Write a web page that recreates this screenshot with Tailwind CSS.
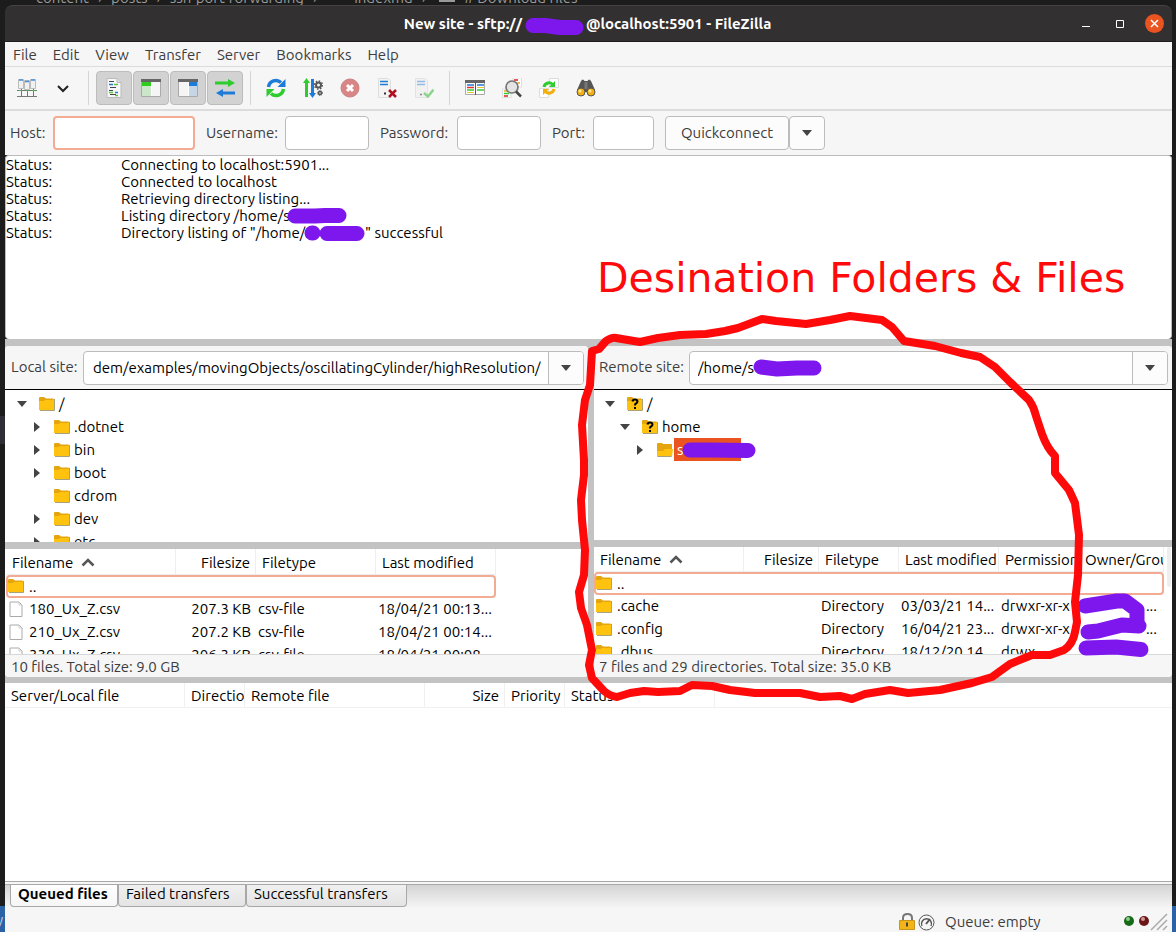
<!DOCTYPE html>
<html lang="en">
<head>
<meta charset="utf-8">
<title>FileZilla</title>
<script src="https://cdn.jsdelivr.net/npm/@tailwindcss/browser@4"></script>
</head>
<body class="relative h-screen overflow-hidden bg-[#1c1c1c] font-['Ubuntu','Noto_Sans',sans-serif] text-[15px] leading-[17px] text-black">

<svg class="hidden" aria-hidden="true">
  <symbol id="folder" viewBox="0 0 16 14"><path d="M0 1h5l1 1h9v11H0z" fill="#ffc20e"/><path d="M0 1q0-1 1-1h4l2 1.500h7.500V3H6L5 4H0z" fill="#e5a50f"/><path d="M1 13.500h14.500V2" fill="none" stroke="#a8a17c"/></symbol>
  <symbol id="unknown" viewBox="0 0 16 14"><use href="#folder"/><path d="M5.500 4.500q.3-2 2.500-2t2.500 2q0 1.200-1.500 2-1 .5-1 2" fill="none" stroke="#000" stroke-width="2"/><path d="M7 10h2v2H7z"/></symbol>
  <symbol id="open" viewBox="0 0 16 14"><path d="M0 1q0-1 1-1h4l1 1h9v12H0z" fill="#e5a50f"/><path d="M0 13V8h6l2-2h8l-1 7.500H0z" fill="#ffc20e"/><path d="M.5 13.500h14" stroke="#a8a17c"/></symbol>
  <symbol id="file" viewBox="0 0 14 16"><path d="M1 1h9l3 3v11.500H1z" fill="#fff" stroke="#aaa"/><path d="M10 1v3h3" fill="none" stroke="#ccc"/></symbol>
  <symbol id="down" viewBox="0 0 10 6"><path d="M0 0h10L5 6z" fill="#444"/></symbol>
  <symbol id="right" viewBox="0 0 6 10"><path d="M0 0v10l6-5z" fill="#444"/></symbol>
  <symbol id="sort" viewBox="0 0 14 9"><path d="M1.500 7.500L7 2l5.500 5.500" fill="none" stroke="#555" stroke-width="2.500"/></symbol>
</svg>

<div class="absolute inset-x-0 top-0 flex h-[5px] items-end gap-[9px] overflow-hidden pl-9 leading-[15px] whitespace-nowrap text-[#999]" aria-hidden="true"><span>content</span><span>›</span><span>posts</span><span>›</span><span>ssh-port-forwarding</span><span>›</span><span class="ml-7">indexmd</span><span>›</span><span class="mb-[3px] ml-1 h-1 w-4 bg-[#999]"></span><span># Download files</span></div>
<div class="absolute top-[416px] left-0 h-7 w-[5px] bg-[#2f2d35]" aria-hidden="true"></div>
<div class="absolute inset-x-0 bottom-0 flex h-[26px] items-center overflow-hidden bg-[#2b61a5] text-white/70" aria-hidden="true"><span class="-ml-1">y</span></div>

<main class="relative flex h-full flex-col pt-[5px] pr-1 pl-[5px]">
  <header class="flex h-[37px] shrink-0 items-center rounded-t-lg border-t border-b border-t-[#454343] border-b-[#1f1d1e] bg-[#333031] pr-2 pl-[101px] text-white">
    <h1 class="flex flex-1 justify-center font-bold"><span>New site - sftp://</span><span class="w-16"></span><span>@localhost:5901 - FileZilla</span></h1>
    <button aria-label="Minimize" class="grid h-5 w-[34px] place-items-center"><svg width="12" height="12"><path d="M2 8.500h8" stroke="#fff"/></svg></button>
    <button aria-label="Maximize" class="grid h-5 w-[34px] place-items-center"><svg width="10" height="10"><path d="M1.500 1.500h7v7h-7z" fill="none" stroke="#fff"/></svg></button>
    <button aria-label="Close" class="ml-2 grid size-[19px] place-items-center rounded-full bg-[#e95420]"><svg width="9" height="9"><path d="M1 1l7 7M8 1l-7 7" stroke="#fff" stroke-width="1.500"/></svg></button>
  </header>

  <nav class="flex h-[25px] shrink-0 items-center gap-4 border-b border-[#dcdcdc] bg-[#f6f6f6] px-2 text-[#3d3d3d]">
    <button>File</button><button>Edit</button><button>View</button><button>Transfer</button><button>Server</button><button>Bookmarks</button><button>Help</button>
  </nav>

  <div class="flex h-11 shrink-0 items-center border-b-2 border-[#dcdcdc] bg-[#f6f6f6]">
    <button aria-label="Site Manager" class="ml-[11px] p-px"><svg width="20" height="20"><g fill="#f1f1f1" stroke="#bbb"><path d="M1.500 1.500h5v9h-5zM13.500 1.500h5v9h-5zM7.500 2.500h5v9h-5z"/></g><path d="M2 2h4M14 2h4M8 3.500h4" stroke="#4a90d9" stroke-width="1.500"/><path d="M0 12.500h20M0 18.500h20M4.500 11v7M10.500 12v7M16.500 11v7" stroke="#777" fill="none"/><path d="M2 12.500h3M9 12.500h3M15 12.500h3" stroke="#5a5"/></svg></button>
    <button aria-label="Site list" class="ml-[17px] p-0.5"><svg width="12" height="9"><path d="M1 2l5 5 5-5" fill="none" stroke="#222" stroke-width="2"/></svg></button>
    <div class="ml-[17px] flex h-[34px] items-center gap-px border-l border-[#d5d5d5] pl-[7px]">
      <button aria-label="Message log" class="grid h-[34px] w-9 place-items-center rounded border border-[#bcbcbc] bg-[#d2d2d2]"><svg width="20" height="20"><path d="M3 .5h10l4 4v15H3z" fill="#f7f7f7" stroke="#bbb"/><path d="M13 .5v4h4" fill="#ddd" stroke="#bbb"/><path d="M5 3.500h5M6 9.500h6M5 12.500h4M6 16.500h6" stroke="#445" /><path d="M5 6.500h4M11 14.500h3" stroke="#2a78d0" stroke-width="1.500"/><path d="M10 6.500h4M5 14.500h4M11 17.500h3" stroke="#5c3" stroke-width="1.500"/></svg></button>
      <button aria-label="Local tree" class="grid h-[34px] w-9 place-items-center rounded border border-[#bcbcbc] bg-[#d2d2d2]"><svg width="20" height="20"><path d="M.5 2h19v16.500H.5z" fill="#f5f5f5" stroke="#aaa"/><path d="M0 1h20v3H0z" fill="#666"/><path d="M1 4h9v4H1z" fill="#2ecc1c"/><path d="M1 8h9v10H1z" fill="#cbe6c8"/><path d="M10.500 4v14" stroke="#fff"/></svg></button>
      <button aria-label="Remote tree" class="grid h-[34px] w-9 place-items-center rounded border border-[#bcbcbc] bg-[#d2d2d2]"><svg width="20" height="20"><path d="M.5 2h19v16.500H.5z" fill="#f5f5f5" stroke="#aaa"/><path d="M0 1h20v3H0z" fill="#666"/><path d="M11 4h8v4h-8z" fill="#1f7bd8"/><path d="M11 8h8v10h-8z" fill="#c6d6e6"/><path d="M10.500 4v14" stroke="#fff"/></svg></button>
      <button aria-label="Transfer queue" class="grid h-[34px] w-9 place-items-center rounded border border-[#bcbcbc] bg-[#d2d2d2]"><svg width="20" height="20"><path d="M0 3.500h13V1l7 4-7 4V6.500H0z" fill="#2ecc2e"/><path d="M20 13.500H8V11l-7 4 7 4v-2.500h12z" fill="#1f7bd8"/></svg></button>
    </div>
    <div class="ml-[7px] flex h-[34px] items-center gap-[17px] border-l border-[#d5d5d5] pl-[15px]">
      <button aria-label="Refresh"><svg width="20" height="20"><path d="M2.500 9a7.500 7.500 0 0 1 12.500-4.500" fill="none" stroke="#1f7bd8" stroke-width="3.500"/><path d="M19.500 1v8h-8z" fill="#1f7bd8"/><path d="M17.500 11A7.500 7.500 0 0 1 5 15.500" fill="none" stroke="#2ecc2e" stroke-width="3.500"/><path d="M.5 19v-8h8z" fill="#2ecc2e"/></svg></button>
      <button aria-label="Process queue"><svg width="20" height="20"><path d="M3.500 19V4" stroke="#2ecc2e" stroke-width="3"/><path d="M0 5l3.500-5L7 5z" fill="#2ecc2e"/><path d="M9.500 1v15" stroke="#1f7bd8" stroke-width="3"/><path d="M6 15l3.500 5 3.500-5z" fill="#1f7bd8"/><g fill="none" stroke="#555"><circle cx="15.500" cy="7" r="2.500" stroke-width="2"/><circle cx="15.500" cy="7" r="4" stroke-width="1.500" stroke-dasharray="1.500 1.600"/><circle cx="17" cy="15" r="1.500" stroke-width="1.500"/><circle cx="17" cy="15" r="2.500" stroke-dasharray="1 1"/></g></svg></button>
      <button aria-label="Cancel"><svg width="20" height="20"><circle cx="10" cy="10" r="9" fill="#d98585" stroke="#c98080"/><path d="M7 7l6 6M13 7l-6 6" stroke="#fff" stroke-width="3"/></svg></button>
      <button aria-label="Disconnect"><svg width="20" height="20"><path d="M1.500.5h9l3 2v17h-12z" fill="#f4f4f4" stroke="#ddd"/><path d="M3 3.500h8M3 6.500h8" stroke="#1f7bd8" stroke-width="1.300"/><path d="M7 15.500h2" stroke="#333" stroke-width="2"/><path d="M12 12l7 7M19 12l-7 7" stroke="#b01020" stroke-width="2.500"/></svg></button>
      <button aria-label="Reconnect"><svg width="20" height="20"><path d="M1.500.5h9l3 2v17h-12z" fill="#f1f1f1" stroke="#e2e2e2"/><path d="M3 3.500h8M3 6.500h8" stroke="#90bbe6" stroke-width="1.300"/><path d="M6 16.500h2" stroke="#888" stroke-width="1.500"/><path d="M10 15l4 3.500 5.500-7" fill="none" stroke="#8ed48e" stroke-width="2.500"/></svg></button>
    </div>
    <div class="ml-[15px] flex h-[34px] items-center gap-[17px] border-l border-[#d5d5d5] pl-[15px]">
      <button aria-label="Directory comparison"><svg width="20" height="20"><path d="M.5 3h19v13.500H.5z" fill="#fff" stroke="#aaa"/><path d="M0 2h20v3H0z" fill="#666"/><path d="M10.500 4v13" stroke="#555"/><path d="M2 7h7M12 7h7" stroke="#1f7bd8" stroke-width="1.500"/><path d="M2 9.500h7" stroke="#d33" stroke-width="1.500"/><path d="M2 12h7M12 12h7" stroke="#3c3" stroke-width="1.500"/><path d="M2 14.500h7M12 9.500h7" stroke="#e8c030"/></svg></button>
      <button aria-label="Filter"><svg width="20" height="20"><path d="M11 0h8.500v9H11zM.5 11H9v8.500H.5z" fill="#fff" stroke="#ddd"/><path d="M12 2h4M2 18h4" stroke="#d22" stroke-width="1.500"/><path d="M15 5h3M2 13h3" stroke="#e8b020" stroke-width="1.500"/><path d="M2 15.500h5" stroke="#3c3" stroke-width="1.500"/><circle cx="10" cy="9" r="6" fill="#e4e4e4" stroke="#777" stroke-width="1.700"/><path d="M14 13.500l5 5" stroke="#444" stroke-width="2.500"/></svg></button>
      <button aria-label="Synchronized browsing"><svg width="20" height="20"><path d="M10.500.5h9v9h-9zM.5 10.500h9v9h-9z" fill="#fff" stroke="#ddd"/><path d="M5 9a5 5 0 0 1 9-2" fill="none" stroke="#2ecc2e" stroke-width="3"/><path d="M16 3v6h-6z" fill="#2ecc2e"/><path d="M15 11a5 5 0 0 1-9 2" fill="none" stroke="#f2b010" stroke-width="3"/><path d="M4 17v-6h6z" fill="#f2b010"/></svg></button>
      <button aria-label="Find files"><svg width="20" height="20"><path d="M1 12L5 3q2-3 3.500 0h3q1.500-3 3.500 0l4 9-7 2h-4z" fill="#555"/><path d="M8.500 4v7h3V4" fill="#777"/><circle cx="5" cy="14" r="4" fill="#f2b010" stroke="#555"/><circle cx="15" cy="14" r="4" fill="#f2b010" stroke="#555"/><circle cx="4" cy="13" r="1.500" fill="#ffe9a0"/><circle cx="14" cy="13" r="1.500" fill="#ffe9a0"/></svg></button>
    </div>
  </div>

  <form class="flex h-[44px] shrink-0 items-center bg-[#f6f6f6] pl-[5px] text-[#3d3d3d]">
    <label for="host" class="w-[43px] pb-0.5">Host:</label><input id="host" class="h-[34px] w-[142px] rounded border-2 border-[#f3ab94] bg-white px-2 outline-none">
    <label for="user" class="ml-[11px] w-[79px] pb-0.5 whitespace-nowrap">Username:</label><input id="user" class="h-[34px] w-[84px] rounded border border-[#bcbcbc] bg-white px-2">
    <label for="pass" class="ml-[11px] w-[77px] pb-0.5 whitespace-nowrap">Password:</label><input id="pass" type="password" class="h-[34px] w-[84px] rounded border border-[#bcbcbc] bg-white px-2">
    <label for="port" class="ml-[11px] w-[41px] pb-0.5">Port:</label><input id="port" class="h-[34px] w-[61px] rounded border border-[#bcbcbc] bg-white px-2">
    <button type="button" class="ml-[11px] h-[34px] w-[124px] rounded border border-[#bcbcbc] bg-[#fcfcfc] pb-0.5">Quickconnect</button>
    <button type="button" aria-label="Quickconnect history" class="grid h-[34px] w-9 place-items-center rounded border border-[#bcbcbc] bg-[#fcfcfc]"><svg width="10" height="6"><use href="#down"/></svg></button>
  </form>

  <section aria-label="Message log" class="h-[184px] shrink-0 rounded border border-[#bcbcbc] border-b-0 bg-white">
    <dl class="grid grid-cols-[115px_1fr]">
      <dt>Status:</dt><dd>Connecting to localhost:5901...</dd>
      <dt>Status:</dt><dd>Connected to localhost</dd>
      <dt>Status:</dt><dd>Retrieving directory listing...</dd>
      <dt>Status:</dt><dd>Listing directory /home/s</dd>
      <dt>Status:</dt><dd class="flex"><span class="w-[244px]">Directory listing of "/home/s</span><span>" successful</span></dd>
    </dl>
  </section>

  <div class="grid h-[344px] shrink-0 grid-cols-[583px_1fr] gap-x-1.5 bg-[#c3c3c3] pt-[7px] pb-1.5">
    <section aria-label="Local site" class="flex min-w-0 flex-col overflow-hidden rounded bg-white">
      <div class="flex h-11 shrink-0 items-center border-b border-black bg-[#f6f6f6] pr-1 pl-1.5 text-[#3d3d3d]">
        <label for="local" class="w-[72px] pb-0.5 whitespace-nowrap">Local site:</label>
        <div class="flex h-[34px] flex-1 overflow-hidden rounded border border-[#bcbcbc] bg-white">
          <input id="local" class="min-w-0 flex-1 pr-1 pl-[9px] text-black" value="dem/examples/movingObjects/oscillatingCylinder/highResolution/">
          <button aria-label="Local paths" class="grid w-[35px] place-items-center border-l border-[#bcbcbc] bg-[#fcfcfc]"><svg width="10" height="6"><use href="#down"/></svg></button>
        </div>
      </div>
      <ul class="h-[152px] shrink-0 overflow-hidden pt-0.5 pl-3 leading-[23px]">
        <li class="flex h-[23px] items-center"><svg class="mr-3" width="10" height="6"><use href="#down"/></svg><svg class="mr-1" width="16" height="14"><use href="#folder"/></svg>/</li>
        <li class="flex h-[23px] items-center"><svg class="mr-[14px] ml-[17px]" width="6" height="10"><use href="#right"/></svg><svg class="mr-1" width="16" height="14"><use href="#folder"/></svg>.dotnet</li>
        <li class="flex h-[23px] items-center"><svg class="mr-[14px] ml-[17px]" width="6" height="10"><use href="#right"/></svg><svg class="mr-1" width="16" height="14"><use href="#folder"/></svg>bin</li>
        <li class="flex h-[23px] items-center"><svg class="mr-[14px] ml-[17px]" width="6" height="10"><use href="#right"/></svg><svg class="mr-1" width="16" height="14"><use href="#folder"/></svg>boot</li>
        <li class="flex h-[23px] items-center pl-[37px]"><svg class="mr-1" width="16" height="14"><use href="#folder"/></svg>cdrom</li>
        <li class="flex h-[23px] items-center"><svg class="mr-[14px] ml-[17px]" width="6" height="10"><use href="#right"/></svg><svg class="mr-1" width="16" height="14"><use href="#folder"/></svg>dev</li>
        <li class="flex h-[23px] items-center"><svg class="mr-[14px] ml-[17px]" width="6" height="10"><use href="#right"/></svg><svg class="mr-1" width="16" height="14"><use href="#folder"/></svg>etc</li>
      </ul>
      <div class="h-[7px] shrink-0 bg-[#c3c3c3]"></div>
      <div class="min-h-0 flex-1 overflow-hidden pl-px">
        <table class="w-[490px] table-fixed border-separate border-spacing-0 whitespace-nowrap">
          <colgroup><col class="w-[170px]"><col class="w-20"><col class="w-[120px]"><col class="w-[120px]"></colgroup>
          <thead><tr class="h-[26px] text-left">
            <th class="border-r border-b border-[#eee] pt-0.5 pl-1.5 font-normal"><span class="flex items-center gap-2">Filename <svg width="14" height="9"><use href="#sort"/></svg></span></th>
            <th class="border-r border-b border-[#eee] pt-0.5 pr-[5px] text-right font-normal">Filesize</th>
            <th class="border-r border-b border-[#eee] pt-0.5 pl-1.5 font-normal">Filetype</th>
            <th class="border-r border-b border-[#eee] pt-0.5 pl-1.5 font-normal">Last modified</th></tr></thead>
          <tbody>
            <tr class="h-[23px]"><td colspan="4" class="rounded border-2 border-[#f3ab94] pb-px"><span class="flex items-center gap-[5px]"><svg width="16" height="14"><use href="#folder"/></svg>..</span></td></tr>
            <tr class="h-[23px]"><td class="pb-0.5 pl-[3px]"><span class="flex items-center gap-1.5"><svg width="14" height="16"><use href="#file"/></svg>180_Ux_Z.csv</span></td><td class="pr-[5px] pb-0.5 text-right">207.3 KB</td><td class="pb-0.5 pl-0.5">csv-file</td><td class="pb-0.5 pl-0.5">18/04/21 00:13...</td></tr>
            <tr class="h-[23px]"><td class="pb-0.5 pl-[3px]"><span class="flex items-center gap-1.5"><svg width="14" height="16"><use href="#file"/></svg>210_Ux_Z.csv</span></td><td class="pr-[5px] pb-0.5 text-right">207.2 KB</td><td class="pb-0.5 pl-0.5">csv-file</td><td class="pb-0.5 pl-0.5">18/04/21 00:14...</td></tr>
            <tr class="h-[23px]"><td class="pb-0.5 pl-[3px]"><span class="flex items-center gap-1.5"><svg width="14" height="16"><use href="#file"/></svg>330_Ux_Z.csv</span></td><td class="pr-[5px] pb-0.5 text-right">206.3 KB</td><td class="pb-0.5 pl-0.5">csv-file</td><td class="pb-0.5 pl-0.5">18/04/21 00:08...</td></tr>
          </tbody>
        </table>
      </div>
      <p class="h-[23px] shrink-0 border-t border-[#d8d8d8] bg-[#f6f6f6] pl-1.5 leading-[23px] text-[#3d3d3d]">10 files. Total size: 9.0 GB</p>
    </section>

    <section aria-label="Remote site" class="flex min-w-0 flex-col overflow-hidden rounded bg-white">
      <div class="flex h-11 shrink-0 items-center border-b border-black bg-[#f6f6f6] pr-1 pl-[5px] text-[#3d3d3d]">
        <label for="remote" class="w-[90px] pb-0.5 whitespace-nowrap">Remote site:</label>
        <div class="flex h-[34px] flex-1 overflow-hidden rounded border border-[#bcbcbc] bg-white">
          <input id="remote" class="min-w-0 flex-1 px-2 text-black" value="/home/s">
          <button aria-label="Remote paths" class="grid w-[35px] place-items-center border-l border-[#bcbcbc] bg-[#fcfcfc]"><svg width="10" height="6"><use href="#down"/></svg></button>
        </div>
      </div>
      <ul class="h-[150px] shrink-0 overflow-hidden pt-0.5 pl-[11px] leading-[23px]">
        <li class="flex h-[23px] items-center"><svg class="mr-3" width="10" height="6"><use href="#down"/></svg><svg class="mr-1" width="16" height="14"><use href="#unknown"/></svg>/</li>
        <li class="flex h-[23px] items-center pl-[15px]"><svg class="mr-3" width="10" height="6"><use href="#down"/></svg><svg class="mr-1" width="16" height="14"><use href="#unknown"/></svg>home</li>
        <li class="flex h-[23px] items-center pl-8"><svg class="mr-[14px]" width="6" height="10"><use href="#right"/></svg><svg class="mr-px" width="16" height="14"><use href="#open"/></svg><span class="w-[67px] bg-[#e95420] pl-[3px] text-white">s</span></li>
      </ul>
      <div class="h-[7px] shrink-0 bg-[#c3c3c3]"></div>
      <div class="flex min-h-0 flex-1 overflow-hidden">
        <table class="w-[570px] table-fixed border-separate border-spacing-0 whitespace-nowrap">
          <colgroup><col class="w-[150px]"><col class="w-[75px]"><col class="w-20"><col class="w-[100px]"><col class="w-20"><col class="w-[85px]"></colgroup>
          <thead><tr class="h-[25px] text-left">
            <th class="border-r border-b border-[#eee] pl-1.5 font-normal"><span class="flex items-center gap-2">Filename <svg width="14" height="9"><use href="#sort"/></svg></span></th>
            <th class="border-r border-b border-[#eee] pr-[5px] text-right font-normal">Filesize</th>
            <th class="border-r border-b border-[#eee] pl-1.5 font-normal">Filetype</th>
            <th class="border-r border-b border-[#eee] pl-1.5 font-normal">Last modified</th>
            <th class="overflow-hidden border-r border-b border-[#eee] pl-1.5 font-normal">Permissions</th>
            <th class="overflow-hidden border-r border-b border-[#eee] pl-1.5 font-normal">Owner/Group</th></tr></thead>
          <tbody>
            <tr class="h-[23px]"><td colspan="6" class="rounded border-2 border-[#f3ab94] pb-px"><span class="flex items-center gap-[5px]"><svg width="16" height="14"><use href="#folder"/></svg>..</span></td></tr>
            <tr class="h-[23px]"><td class="pb-0.5 pl-0.5"><span class="flex items-center gap-[5px]"><svg width="16" height="14"><use href="#folder"/></svg>.cache</span></td><td></td><td class="pb-0.5 pl-0.5">Directory</td><td class="pb-0.5 pl-0.5">03/03/21 14...</td><td class="pb-0.5 pl-0.5">drwxr-xr-x</td><td class="pr-[7px] pb-0.5 text-right">...</td></tr>
            <tr class="h-[23px]"><td class="pb-0.5 pl-0.5"><span class="flex items-center gap-[5px]"><svg width="16" height="14"><use href="#folder"/></svg>.config</span></td><td></td><td class="pb-0.5 pl-0.5">Directory</td><td class="pb-0.5 pl-0.5">16/04/21 23...</td><td class="pb-0.5 pl-0.5">drwxr-xr-x</td><td class="pr-[7px] pb-0.5 text-right">...</td></tr>
            <tr class="h-[23px]"><td class="pb-0.5 pl-0.5"><span class="flex items-center gap-[5px]"><svg width="16" height="14"><use href="#folder"/></svg>.dbus</span></td><td></td><td class="pb-0.5 pl-0.5">Directory</td><td class="pb-0.5 pl-0.5">18/12/20 14...</td><td class="pb-0.5 pl-0.5">drwx------</td><td></td></tr>
          </tbody>
        </table>
        <div class="ml-[3px] h-10 w-1 self-start rounded bg-[#eee]"></div>
      </div>
      <p class="h-[23px] shrink-0 border-t border-[#d8d8d8] bg-[#f6f6f6] pl-[5px] leading-[23px] text-[#3d3d3d]">7 files and 29 directories. Total size: 35.0 KB</p>
    </section>
  </div>

  <section aria-label="Transfer queue" class="min-h-0 flex-1 border-b border-[#a8a8a8] bg-white">
    <table class="w-full table-fixed border-separate border-spacing-0 whitespace-nowrap">
      <colgroup><col class="w-[180px]"><col class="w-[60px]"><col class="w-[180px]"><col class="w-20"><col class="w-[60px]"><col class="w-[150px]"><col></colgroup>
      <thead><tr class="h-[25px] text-left">
        <th class="border-r border-b border-[#f0f0f0] pl-1.5 font-normal">Server/Local file</th>
        <th class="overflow-hidden border-r border-b border-[#f0f0f0] pl-1.5 font-normal">Directio</th>
        <th class="border-r border-b border-[#f0f0f0] pl-1.5 font-normal">Remote file</th>
        <th class="border-r border-b border-[#f0f0f0] pr-[5px] text-right font-normal">Size</th>
        <th class="border-r border-b border-[#f0f0f0] pl-1.5 font-normal">Priority</th>
        <th class="border-r border-b border-[#f0f0f0] pl-1.5 font-normal">Status</th>
        <td class="border-b border-[#f0f0f0]"></td></tr></thead>
    </table>
  </section>

  <footer class="shrink-0 bg-[#f6f6f6] pt-0.5">
    <div role="tablist" class="flex h-6 border-t border-[#a8a8a8] bg-linear-to-b from-[#d4d4d4] to-[#f6f6f6] pl-[5px]">
      <button role="tab" aria-selected="true" class="h-[22px] w-[108px] rounded-b border border-t-0 border-[#a8a8a8] bg-linear-to-b from-white to-[#f6f6f6] px-[7px] pb-1 text-left font-bold whitespace-nowrap">Queued files</button>
      <button role="tab" class="h-[22px] w-32 rounded-b border border-t-0 border-[#a8a8a8] bg-linear-to-b from-[#f0f0f0] to-[#e4e4e4] px-[7px] pb-1 text-left">Failed transfers</button>
      <button role="tab" class="h-[22px] w-[161px] rounded-b border border-t-0 border-[#a8a8a8] bg-linear-to-b from-[#f0f0f0] to-[#e4e4e4] px-[7px] pb-1 text-left">Successful transfers</button>
    </div>
    <div class="flex h-6 items-center justify-end pt-[3px] text-[#3d3d3d]">
      <svg width="36" height="18" class="mr-2.5"><path d="M4 8V5q0-4 4.500-4T13 5v3" fill="none" stroke="#777" stroke-width="2"/><path d="M.5 7.500h15v9H.5z" fill="#f2b417" stroke="#c8951c"/><path d="M8 9.500v4" stroke="#444" stroke-width="2"/><g fill="none" stroke="#555"><circle cx="27.500" cy="9.500" r="7.500"/><path d="M23 13a5 5 0 1 1 9 0" stroke-width="1.500"/><path d="M27 11l4-5" stroke-width="2"/></g></svg>
      <span class="w-[178px]">Queue: empty</span>
      <svg width="48" height="20" class="mr-px"><circle cx="6" cy="9" r="5" fill="#176b17"/><circle cx="5" cy="7" r="2" fill="#8fc98f"/><circle cx="21" cy="9" r="5" fill="#6b1717"/><circle cx="20" cy="7" r="2" fill="#d09a9a"/><path d="M28 18L44 2M34 18L44 8M40 18l4-4" stroke="#aaa" stroke-width="1.500"/></svg>
    </div>
  </footer>
</main>

<svg class="pointer-events-none absolute top-0 left-0" width="1176" height="932" fill="none" stroke-linecap="round" stroke-linejoin="round" aria-hidden="true">
  <g stroke="#7d17ee" stroke-width="15">
    <path d="M533 25.500h12l15 2h16"/>
    <path d="M295 216h20l10-.5h14"/>
    <path d="M312 233h1M327 233.500h30"/>
    <path d="M761 367l16 2 20-1h17"/>
    <path d="M690 450h20l38 .5"/>
    <path d="M1085 606l32-5h8l12 9v12M1088 632l10-1 24-6 17 1"/>
    <path d="M1086 648l30-1 25 2.500"/>
  </g>
  <path stroke="#ff0a0a" stroke-width="8" d="M592 351L599 349 606 341Q612 337 616 338L640 342 658 338 680 335 706 334 725 331 738 328 762 319 776 321 806 324 830 320 850 316 882 320 892 327 904 341 935 346 961 353 980 357 995 367 1010 382 1029 400Q1034 407 1036 416L1042 434Q1047 448 1055 456V473L1069 490 1075 503 1079 535 1078 575 1075 602 1077 622 1075 632Q1073 644 1064 650L1050 655 1032 655 1010 664 992 677 972 683 940 690 908 693 890 690 865 694 852 699 840 696 820 697 800 693 755 693 730 690 712 686 692 685 680 691 658 692 644 691 630 693 617 697Q610 696 604 691L592 678 589 665 592 650 587 625 581 608 579 592 584 575 585 550 582 520 581 500 584 475 584 460 582 425 585 400 590 385 591 368z"/>
</svg>
<p class="pointer-events-none absolute top-[253px] left-[597px] font-['DejaVu_Sans',sans-serif] text-[41px] leading-[50px] whitespace-nowrap text-[#ff0a0a]">Desination Folders &amp; Files</p>
</body>
</html>
